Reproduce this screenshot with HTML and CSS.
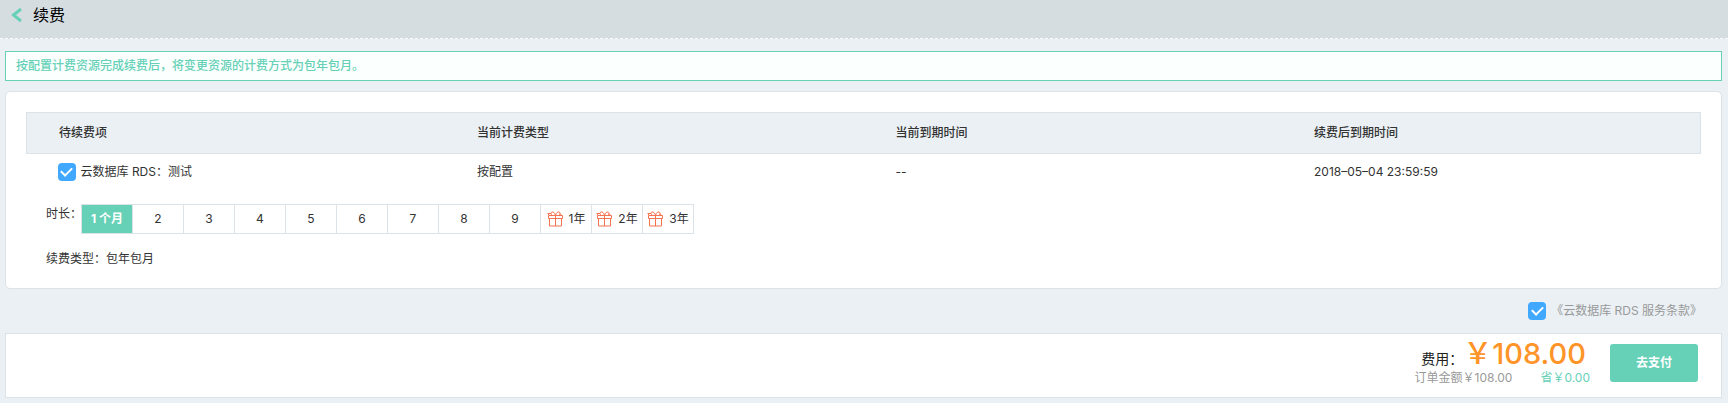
FILE: index.html
```html
<!DOCTYPE html>
<html lang="zh-CN">
<head>
<meta charset="utf-8">
<title>续费</title>
<link rel="stylesheet" href="styles.css">
</head>
<body>
<header class="topbar">
  <a class="back" href="#" aria-label="返回"><svg width="12" height="16" viewBox="0 0 12 16" fill="none" stroke="#66d1b7" stroke-width="3"><path d="M10 2 2.500 8l7.500 6"/></svg></a>
  <h1 class="title">续费</h1>
</header>
<main class="page">
  <p class="notice">按配置计费资源完成续费后，将变更资源的计费方式为包年包月。</p>
  <section class="card">
    <table class="items">
      <thead>
        <tr><th>待续费项</th><th>当前计费类型</th><th>当前到期时间</th><th>续费后到期时间</th></tr>
      </thead>
      <tbody>
        <tr>
          <td class="first"><label class="pick"><input class="check" type="checkbox" checked>云数据库 RDS：测试</label></td>
          <td>按配置</td>
          <td>--</td>
          <td>2018–05–04 23:59:59</td>
        </tr>
      </tbody>
    </table>
    <div class="field">
      <span id="duration">时长：</span>
      <div class="months" role="group" aria-labelledby="duration">
        <button class="month active" type="button">1 个月</button>
        <button class="month" type="button">2</button>
        <button class="month" type="button">3</button>
        <button class="month" type="button">4</button>
        <button class="month" type="button">5</button>
        <button class="month" type="button">6</button>
        <button class="month" type="button">7</button>
        <button class="month" type="button">8</button>
        <button class="month" type="button">9</button>
        <button class="month gift" type="button"><svg class="icon" viewBox="0 0 16 16"><use href="#gift"/></svg>1年</button>
        <button class="month gift" type="button"><svg class="icon" viewBox="0 0 16 16"><use href="#gift"/></svg>2年</button>
        <button class="month gift" type="button"><svg class="icon" viewBox="0 0 16 16"><use href="#gift"/></svg>3年</button>
      </div>
    </div>
    <p class="kind">续费类型：包年包月</p>
  </section>
  <div class="terms">
    <input class="check" id="agree" type="checkbox" checked>
    <label for="agree"><a class="link" href="#">《云数据库 RDS 服务条款》</a></label>
  </div>
  <footer class="pay">
    <div class="cost">
      <div class="total"><span class="caption">费用：</span><span class="price">￥108.00</span></div>
      <div class="detail"><span>订单金额￥108.00</span><span class="saved">省￥0.00</span></div>
    </div>
    <button class="submit" type="button">去支付</button>
  </footer>
</main>
<svg class="defs" width="0" height="0" aria-hidden="true">
  <symbol id="gift" viewBox="0 0 16 16">
    <g fill="none" stroke="#f5734f" stroke-width="1">
      <path d="M1.500 4.500h14v3h-14zM2.500 7.500v7.500h12v-7.500M8.500 4.500v10.500"/>
      <path d="M8.500 4.500C8 2 6.200.5 4.900 1 3.500 1.500 3.600 3.700 5.500 4.500M8.500 4.500C9 2 10.800.5 12.100 1c1.400.5 1.300 2.700-.6 3.500M4 2.500H.5M1 3l1.500 1.500M13 2.500l1.500 2"/>
    </g>
  </symbol>
</svg>
</body>
</html>
```

FILE: styles.css
```css
* {
  box-sizing: border-box;
}

body {
  margin: 0;
  background: #eaf0f4;
  color: #333;
  font: 12px/18px Inter, "Noto Sans CJK SC", sans-serif;
}

button,
input {
  margin: 0;
  font: inherit;
  color: inherit;
}

.topbar {
  display: flex;
  align-items: flex-start;
  gap: 10px;
  height: 39px;
  padding: 4px 11px;
  background: #d5dde0;
  border-bottom: 1px dashed #f8fafb;
}

.back {
  display: flex;
  padding-top: 3px;
}

.title {
  margin: 0;
  color: #000;
  font-size: 16px;
  font-weight: 400;
  line-height: 22px;
}

.page {
  padding: 12px 6px 5px 5px;
}

.notice {
  margin: 0 0 10px;
  padding: 5px 10px;
  border: 1px solid #66d1b7;
  background: #fbfffe;
  color: #66d1b7;
  font-weight: 500;
}

.card {
  padding: 20px;
  border: 1px solid #dbe2e8;
  border-radius: 5px;
  background: #fff;
}

.items {
  width: 100%;
  border-collapse: collapse;
  table-layout: fixed;
}

.items thead {
  border: 1px solid #dbe2e8;
  background: #eaf0f4;
}

.items th {
  padding: 11px 0 11px 32px;
  font-weight: 500;
  text-align: left;
}

.items td {
  padding: 9px 0 9px 32px;
}

.items .first {
  padding-left: 31px;
}

.pick {
  display: flex;
  align-items: center;
  gap: 5px;
}

.check {
  display: grid;
  flex: none;
  place-items: center;
  width: 18px;
  height: 18px;
  border-radius: 4px;
  background: #40a9ff;
  appearance: none;
}

.check:checked::before {
  width: 9px;
  height: 5px;
  margin-bottom: 4px;
  border: solid #fff;
  border-width: 0 0 2px 2px;
  content: "";
  transform: rotate(-45deg);
}

.field {
  display: flex;
  padding: 14px 20px 0;
}

.field > span {
  width: 35px;
  padding-top: 1px;
  white-space: nowrap;
}

.months {
  display: flex;
  border: 1px solid #dbe2e8;
}

.month {
  display: flex;
  align-items: center;
  justify-content: center;
  width: 51px;
  height: 28px;
  padding: 0;
  border: 0;
  border-right: 1px solid #dbe2e8;
  background: #fff;
}

.month:last-child {
  width: 50px;
  border-right: 0;
}

.month.active {
  background: #66d1b7;
  color: #fff;
  font-weight: 700;
}

.gift {
  gap: 6px;
}

.icon {
  width: 16px;
  height: 16px;
}

.kind {
  margin: 0;
  padding: 16px 20px 0;
}

.terms {
  display: flex;
  align-items: center;
  justify-content: flex-end;
  gap: 5px;
  padding: 13px 20px;
}

.link {
  color: #999;
  text-decoration: none;
}

.pay {
  display: flex;
  align-items: flex-start;
  justify-content: flex-end;
  gap: 20px;
  padding: 10px 23px 10px 20px;
  border: 1px solid #dbe2e8;
  background: #fff;
}

.total {
  display: flex;
  align-items: baseline;
  justify-content: flex-end;
  padding-right: 4px;
  line-height: 20px;
}

.caption {
  color: #222;
  font-size: 14px;
}

.price {
  color: #ff9428;
  font-size: 29px;
  font-weight: 500;
}

.detail {
  display: flex;
  gap: 28px;
  color: #999;
}

.saved {
  color: #66d1b7;
}

.submit {
  width: 88px;
  height: 38px;
  border: 0;
  border-radius: 3px;
  background: #66d1b7;
  color: #fff;
  font-weight: 700;
}

.defs {
  position: absolute;
}
```
